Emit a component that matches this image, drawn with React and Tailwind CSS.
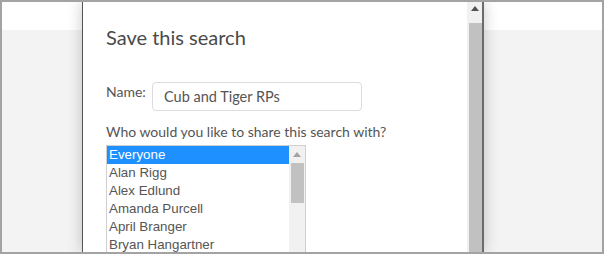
import React from 'react';

const people = ['Everyone', 'Alan Rigg', 'Alex Edlund', 'Amanda Purcell', 'April Branger', 'Bryan Hangartner'];

const UpArrow = ({ className }) => (
  <svg width="8" height="5" viewBox="0 0 8 5" className={className}>
    <path d="M0 5 L4 0 L8 5 Z" fill="currentColor" />
  </svg>
);

const SideBg = () => (
  <div className="flex flex-col h-full">
    <div className="h-[28px] bg-white" />
    <div className="flex-1 bg-[#f3f3f3]" />
  </div>
);

const App = () => {
  return (
    <div className="w-[604px] h-[254px] border-2 border-[#a3a3a3] flex overflow-hidden bg-white">
      <div className="w-[80px] shrink-0">
        <SideBg />
      </div>

      <div className="relative z-10 flex w-[402px] shrink-0 bg-white border-l border-[#555] border-r-2 border-r-[#6b6b6b] shadow-[0_0_14px_rgba(0,0,0,0.22)]">
        <div className="w-[384px] pl-[23px] pt-[23px] font-['Lato',sans-serif] text-[#555]">
          <h2 className="text-[20px] leading-[24px] text-[#4a4a4a]">Save this search</h2>

          <div className="flex items-start mt-[33px]">
            <label className="text-[14px] leading-[18px] w-[46px] pt-[1px]">Name:</label>
            <div className="w-[210px] h-[29px] border border-[#dcdcdc] rounded-[4px] px-[11px] flex items-center text-[14.5px]">
              Cub and Tiger RPs
            </div>
          </div>

          <p className="text-[14px] leading-[18px] mt-[12px]">Who would you like to share this search with?</p>

          <div className="mt-[4px] w-[200px] h-[140px] border border-[#cfcfcf] flex overflow-hidden font-['Liberation_Sans',Arial,sans-serif] text-[13.33px] leading-[18px] text-[#555]">
            <ul className="flex-1">
              {people.map((p, i) => (
                <li key={p} className={i === 0 ? 'bg-[#1e90ff] text-white pl-[2px]' : 'pl-[2px]'}>{p}</li>
              ))}
            </ul>
            <div className="w-[16px] bg-[#f1f1f1] flex flex-col items-center">
              <UpArrow className="mt-[6px] text-[#a3a3a3]" />
              <div className="mt-[6px] w-[13px] h-[40px] bg-[#c1c1c1]" />
            </div>
          </div>
        </div>

        <div className="w-[15px] bg-[#f1f1f1] flex flex-col items-center">
          <UpArrow className="mt-[4px] text-[#505050]" />
          <div className="mt-[12px] ml-[1px] w-[13px] flex-1 bg-[#c1c1c1]" />
        </div>
      </div>

      <div className="flex-1">
        <SideBg />
      </div>
    </div>
  );
};

export default App;
